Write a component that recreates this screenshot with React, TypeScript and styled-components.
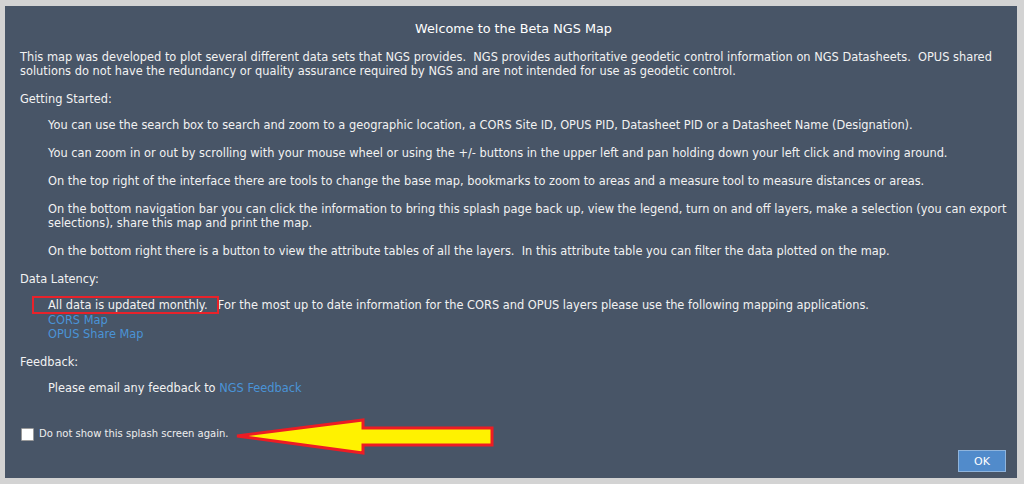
import React from 'react'
import styled, { createGlobalStyle } from 'styled-components'

const GlobalStyle = createGlobalStyle`
  html, body {
    margin: 0;
    padding: 0;
    background: #d3d3d3;
  }
`;

const Page = styled.div`
  padding: 6px 7px 6px 5px;
  height: 484px;
  box-sizing: border-box;
`;

const Dialog = styled.div`
  height: 472px;
  box-sizing: border-box;
  background: #485567;
  color: #f2f2f2;
  font-family: 'DejaVu Sans', Verdana, sans-serif;
  font-size: 11.4px;
  line-height: 14px;
  display: flex;
  flex-direction: column;
  padding: 0 4px 6px 15px;
`;

const Title = styled.div`
  text-align: center;
  font-size: 12.8px;
  padding: 15px 0 13px;
  margin-right: 6px;
  line-height: 16px;
  color: #ffffff;
`;

const Body = styled.div`
  flex: 1;
`;

const Para = styled.p<{ indent?: boolean; gap?: number }>`
  margin: 0 0 ${(p) => (p.gap ?? 14)}px;
  padding-left: ${(p) => (p.indent ? '28px' : '0')};
`;

const Highlight = styled.span`
  outline: 2px solid #e8222a;
  padding: 0 9px 0 14px;
  margin-left: -14px;
  margin-right: -6px;
`;

const Link = styled.a`
  color: #4a93d6;
  text-decoration: none;
  cursor: pointer;
`;

const LinkList = styled.div`
  display: flex;
  flex-direction: column;
  margin-top: 1px;
`;

const Footer = styled.div`
  display: flex;
  flex-direction: column;
`;

const CheckRow = styled.label`
  display: flex;
  align-items: center;
  gap: 5px;
  font-size: 10px;
  color: #eeeeee;
  position: relative;
  margin-left: 1px;
`;

const Box = styled.span`
  width: 11px;
  height: 11px;
  background: #ffffff;
  border: 1px solid #9a9a9a;
  border-radius: 1px;
  display: inline-block;
`;

const ArrowMark = styled.svg`
  position: absolute;
  left: 213px;
  top: -9px;
`;

const ButtonRow = styled.div`
  display: flex;
  justify-content: flex-end;
  margin-top: 9px;
  margin-right: 7px;
`;

const OkButton = styled.button`
  width: 48px;
  height: 22px;
  background: #518bcb;
  border: 1px solid #8fb4dc;
  color: #ffffff;
  font-family: 'DejaVu Sans', Verdana, sans-serif;
  font-size: 11px;
  padding: 0;
  cursor: pointer;
`;

const App = (): JSX.Element => (
  <>
    <GlobalStyle />
    <Page>
      <Dialog>
        <Title>Welcome to the Beta NGS Map</Title>
        <Body>
          <Para>
            This map was developed to plot several different data sets that NGS provides.&nbsp; NGS provides authoritative geodetic control information on NGS Datasheets.&nbsp; OPUS shared solutions do not have the redundancy or quality assurance required by NGS and are not intended for use as geodetic control.
          </Para>
          <Para gap={12}>Getting Started:</Para>
          <Para indent>
            You can use the search box to search and zoom to a geographic location, a CORS Site ID, OPUS PID, Datasheet PID or a Datasheet Name (Designation).
          </Para>
          <Para indent>
            You can zoom in or out by scrolling with your mouse wheel or using the +/- buttons in the upper left and pan holding down your left click and moving around.
          </Para>
          <Para indent>
            On the top right of the interface there are tools to change the base map, bookmarks to zoom to areas and a measure tool to measure distances or areas.
          </Para>
          <Para indent>
            On the bottom navigation bar you can click the information to bring this splash page back up, view the legend, turn on and off layers, make a selection (you can export selections), share this map and print the map.
          </Para>
          <Para indent>
            On the bottom right there is a button to view the attribute tables of all the layers.&nbsp; In this attribute table you can filter the data plotted on the map.
          </Para>
          <Para gap={12}>Data Latency:</Para>
          <Para indent>
            <Highlight>All data is updated monthly.</Highlight>&nbsp; For the most up to date information for the CORS and OPUS layers please use the following mapping applications.
            <LinkList>
              <Link>CORS Map</Link>
              <Link>OPUS Share Map</Link>
            </LinkList>
          </Para>
          <Para gap={12}>Feedback:</Para>
          <Para indent>
            Please email any feedback to <Link>NGS Feedback</Link>
          </Para>
        </Body>
        <Footer>
          <CheckRow>
            <Box />
            Do not show this splash screen again.
            <ArrowMark width="262" height="38" viewBox="0 0 262 38">
              <polygon
                points="3,18 129,2 129,10 258,10 258,27 129,27 129,35"
                fill="#fff200"
                stroke="#ed1c24"
                strokeWidth="3"
                strokeLinejoin="miter"
              />
            </ArrowMark>
          </CheckRow>
          <ButtonRow>
            <OkButton>OK</OkButton>
          </ButtonRow>
        </Footer>
      </Dialog>
    </Page>
  </>
);

export default App;
